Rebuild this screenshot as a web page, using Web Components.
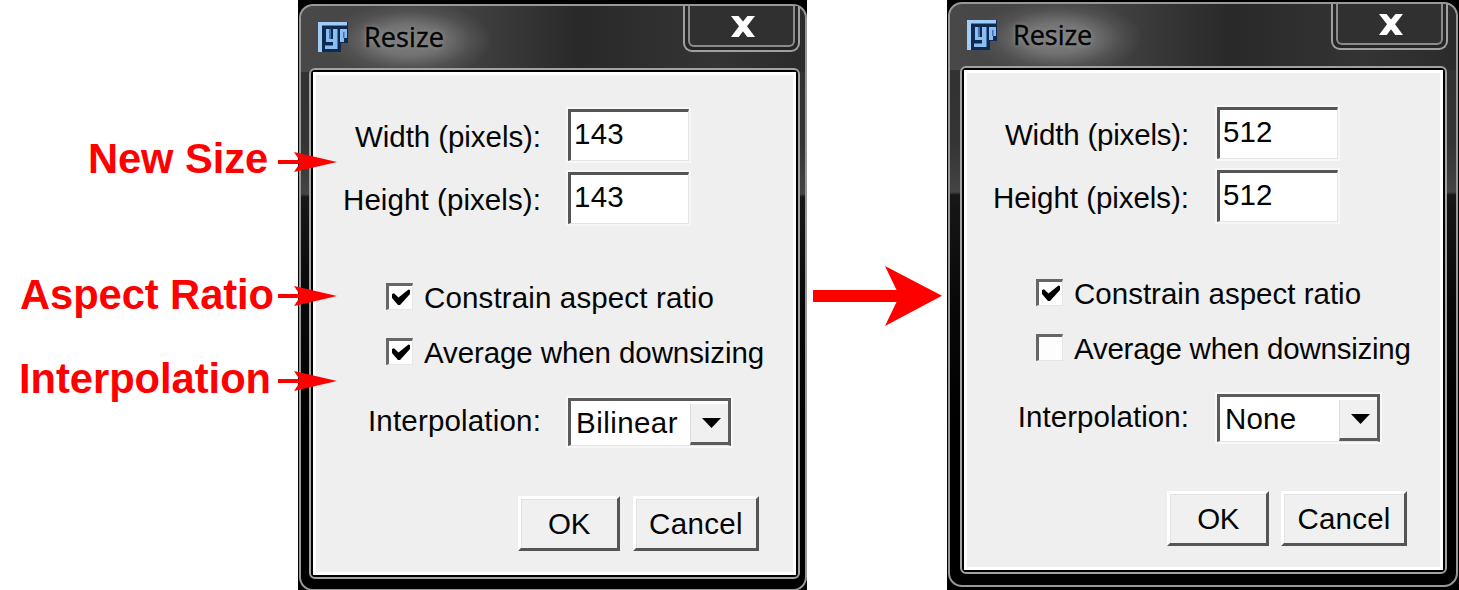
<!DOCTYPE html>
<html lang="en">
<head>
<meta charset="utf-8">
<title>Resize</title>
<style>
html,body{margin:0;padding:0;background:#fff}
body{width:1459px;height:590px;overflow:hidden;font-family:"Liberation Sans",Arial,sans-serif}
</style>
</head>
<body>
<resize-figure></resize-figure>
<script>
const define = (name, css, html, after) => {
  const t = document.createElement('template');
  t.innerHTML = `<style>${css}</style>${html}`;
  customElements.define(name, class extends HTMLElement {
    connectedCallback() {
      if (this.shadowRoot) return;
      this.attachShadow({mode: 'open'}).append(t.content.cloneNode(true));
      if (after) after(this, this.shadowRoot);
    }
  });
};

define('note-arrow', `
:host{display:block;flex:none;width:58px;height:20px}
svg{display:block}`,
`<svg width="59" height="20" viewBox="0 0 59 20"><path fill="#f00" d="M0 8H21.3L16 0L59 10L16 20L21.3 12H0Z"/></svg>`);

define('side-note', `
:host{display:flex;justify-content:flex-end;align-items:center;height:44px;color:#f00;font-weight:bold;font-size:41.7px}
note-arrow{margin-left:var(--gap,10px);margin-top:var(--drop,5px)}`,
`<slot></slot><note-arrow></note-arrow>`);

define('flow-arrow', `:host{display:block;width:129px;height:60px}svg{display:block}`,
`<svg width="129" height="60" viewBox="0 0 129 60"><path fill="#f00" d="M0 24H83.5L72 0L129 29.7L72 60L83.5 36H0Z"/></svg>`);

define('fiji-logo', `:host{display:block;width:32px;height:32px}svg{display:block}`,
`<svg width="32" height="32" viewBox="0 0 32 32"><path fill="#0d2a50" d="M1 1H31V22H24V31H1Z"/>
<path fill="#a3cdf5" d="M1 1H30V4.5H5V31H1Z"/>
<path fill="#8cbdf0" d="M9 8H12.5V18H16V8H20.5V28H8V24.5H16V21H9ZM23 8H30V17H27V21H23Z"/><path fill="#3f74b4" d="M26 11H27.5V17H26ZM12.500 8H14V18H12.500Z"/></svg>`);

define('close-button', `
:host{display:block;box-sizing:border-box;width:117px;height:46px;border:2px solid #a0a0a0;border-top:0;border-radius:0 0 9px 9px;padding:0 3px 3px;background:#252525}
div{box-sizing:border-box;height:41px;border:2px solid #8b8b8b;border-top:0;border-radius:0 0 6px 6px;background:#303030;display:flex;justify-content:center;padding:10px 0 0 2px}
svg{display:block}`,
`<div><svg width="24" height="21" viewBox="0 0 24 21"><path fill="#fff" d="M0 0H7.500L12 5.500L16.500 0H24L16 10.300L24 21H16.300L12 15.300L7.700 21H0L8 10.300Z"/></svg></div>`);

define('text-field', `
:host{display:flex;box-sizing:border-box;width:121px;height:52px;background:#fff;border:3px solid;border-color:#555 #e4e4e4 #e4e4e4 #555;border-right-width:1px;border-bottom-width:1px;padding:7px 0 0 3px;outline:2px solid #f7f7f7}`,
`<slot></slot>`);

define('drop-down', `
:host{display:flex;box-sizing:border-box;width:163px;height:48px;background:#fff;border:3px solid #5b5b5b;border-bottom:1px solid #e4e4e4;padding-left:5px;align-items:center;outline:2px solid #f8f8f8}
div{margin-left:auto;width:38px;height:41px;box-sizing:border-box;margin-top:3px;background:#f0f0f0;border-left:1px solid #ddd;border-bottom:3px solid #5b5b5b;display:flex;align-items:center;justify-content:center}
svg{display:block;margin-left:3px}`,
`<slot></slot><div><svg width="19" height="10" viewBox="0 0 19 10"><path d="M0 0H19L9.5 10Z"/></svg></div>`);

define('check-box', `
:host{display:flex;height:27px;align-items:center}
div{box-sizing:border-box;width:27px;height:27px;background:#fdfdfd;border:3px solid;border-color:#666 #e6e6e6 #e6e6e6 #666;border-right-width:1px;border-bottom-width:1px;margin-right:11px;flex:none}
svg{display:none;margin:3px 0 0 3px}
:host([checked]) svg{display:block}
::slotted(*){margin-top:3px}`,
`<div><svg width="18" height="17" viewBox="0 0 18 17"><path d="M0 5L2 4.3L6.5 8.5L16.500 0.500L18 1V5L8 16H6L0 9Z"/></svg></div><slot></slot>`);

define('push-button', `
:host{display:flex;box-sizing:border-box;height:55px;border:3px solid;border-color:#fff #555 #555 #fff;background:#f0f0f0;align-items:center;justify-content:center;padding-top:2px;box-shadow:inset 1px 1px #e2e2e2}`,
`<slot></slot>`);

define('resize-dialog', `
:host{display:block;box-sizing:border-box;height:590px;background:#000;overflow:hidden;flex:none;padding:var(--out)}
.frame{box-sizing:border-box;width:var(--fw);height:var(--fh);border:2px solid #989898;border-radius:14px;padding:0 8px;
 background:radial-gradient(ellipse 84px 38px at 108px 34px,#7d7d7d 0,#727272 40%,rgba(90,90,90,.55) 75%,transparent),linear-gradient(90deg,#484848 0,#444 30%,#292929 55%,#343434 82%,#2b2b2b) 0 0/100% 66px no-repeat,linear-gradient(#303030 0,#343434 140px,#444 188px,#171717 191px,#080808 300px,#000 420px)}
.bar{display:flex;height:62px;padding-left:8px}
fiji-logo{margin-top:15px}
.title{font:27px/30px "Open Sans","Noto Sans",sans-serif;margin:16px 0 0 15px;color:#050505;-webkit-text-stroke:.4px #050505;text-shadow:0 0 5px #999}
close-button{margin-left:auto;margin-right:var(--cr)}
.inner{box-sizing:border-box;width:var(--iw);height:var(--ih);border:2px solid #a2a2a2;border-radius:6px;background:#000;padding:2px;margin-left:var(--ix)}
.panel{box-sizing:border-box;height:100%;background:#efefef;box-shadow:inset 0 0 0 3px #fff;padding-top:37px;font-size:29.5px;color:#050505}
.row{display:flex;align-items:center}
.row .lab{width:var(--lw);display:flex;justify-content:flex-end;margin:4px var(--lg) 0 0}
.f{height:52px;margin-bottom:10.5px}
.checks{margin:var(--cg) 0 0 var(--cx);display:grid;row-gap:28px}
.s{margin-top:33px;height:48px}
.s .lab{margin-top:-2px}
.btns{display:flex;margin-top:var(--bg);padding-left:var(--bx);gap:var(--bb)}
.ok{width:102px}.cancel{width:126px}`,
`<div class="frame"><div class="bar"><fiji-logo></fiji-logo><fit-text class="title" w="80">Resize</fit-text><close-button></close-button></div>
<div class="inner"><div class="panel">
<div class="row f"><div class="lab"><fit-text w="186">Width (pixels):</fit-text></div><text-field><slot name="width"></slot></text-field></div>
<div class="row f"><div class="lab"><fit-text w="198">Height (pixels):</fit-text></div><text-field><slot name="height"></slot></text-field></div>
<div class="checks"><check-box checked><fit-text w="290">Constrain aspect ratio</fit-text></check-box>
<check-box class="avg"><fit-text w="340">Average when downsizing</fit-text></check-box></div>
<div class="row s"><div class="lab"><fit-text w="173">Interpolation:</fit-text></div><drop-down><slot name="mode"></slot></drop-down></div>
<div class="btns"><push-button class="ok"><fit-text w="42">OK</fit-text></push-button><push-button class="cancel"><fit-text w="94">Cancel</fit-text></push-button></div>
</div></div></div>`, (el, root) => {
  if (el.hasAttribute('average')) root.querySelector('.avg').setAttribute('checked', '');
});

define('resize-figure', `
:host{display:flex;width:1459px;height:590px;overflow:hidden}
.notes{width:336px;margin-right:-38px;flex:none;position:relative;z-index:1;padding-top:137px;box-sizing:border-box}
.n2{margin-top:92px;--gap:4px;--drop:1px}.n3{margin-top:40px;--gap:7px;--drop:4px}
.first{width:509px;--out:4px 0 0 1px;--fw:508px;--fh:587px;--cr:-3px;--iw:491px;--ih:511px;--ix:0px;--lw:228px;--lg:27px;--cg:59px;--cx:73px;--bg:50px;--bx:205px;--bb:13px}
.gap{width:140px;flex:none;box-sizing:border-box;padding:266px 0 0 6px}
.second{width:512px;--k:.99;--out:2px 0 0 1px;--fw:510px;--fh:585px;--cr:0px;--iw:487px;--ih:508px;--ix:2px;--lw:225px;--lg:28px;--cg:57px;--cx:72px;--bg:49px;--bx:203px;--bb:12px}`,
`<div class="notes"><side-note><fit-text w="180">New Size</fit-text></side-note>
<side-note class="n2"><fit-text w="254">Aspect Ratio</fit-text></side-note>
<side-note class="n3"><fit-text w="252">Interpolation</fit-text></side-note></div>
<resize-dialog class="first" average><fit-text slot="width" w="50">143</fit-text><fit-text slot="height" w="50">143</fit-text><fit-text slot="mode" w="102">Bilinear</fit-text></resize-dialog>
<div class="gap"><flow-arrow></flow-arrow></div>
<resize-dialog class="second"><fit-text slot="width" w="50">512</fit-text><fit-text slot="height" w="50">512</fit-text><fit-text slot="mode" w="72">None</fit-text></resize-dialog>`);

/* Text whose tracking is set so that it fills its w attribute, scaled by --k.
   Registered last, so every instance is measured with its final font. */
define('fit-text', `
:host{display:block;white-space:nowrap;line-height:1;flex:none}
span{display:inline-block}`, `<span><slot></slot></span>`, (el, root) => {
  const s = root.querySelector('span');
  const k = parseFloat(getComputedStyle(el).getPropertyValue('--k')) || 1;
  const target = parseFloat(el.getAttribute('w')) * k;
  s.style.letterSpacing = (target - s.getBoundingClientRect().width) / el.textContent.length + 'px';
  el.style.width = target + 'px';
});
</script>
</body>
</html>
